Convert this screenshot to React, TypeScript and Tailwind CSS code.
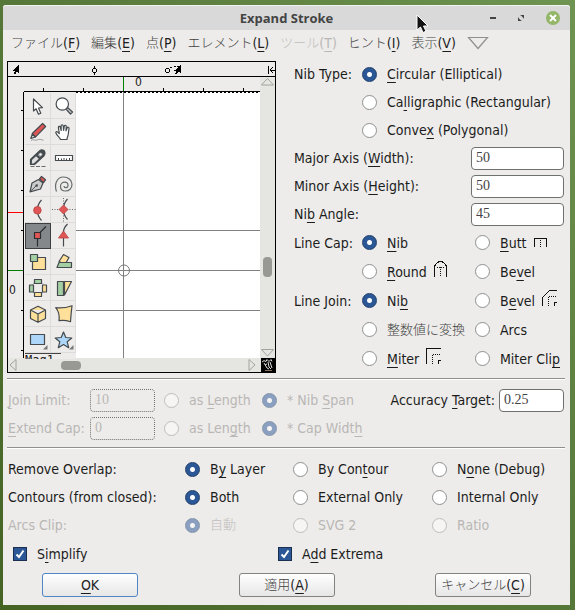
import React from "react";

/* Label text in which the character after "_" is the keyboard mnemonic. */
function Mnemonic({ text }: { text: string }) {
  const at = text.indexOf("_");
  if (at < 0) return <span className="whitespace-nowrap">{text}</span>;
  return (
    <span className="whitespace-nowrap">
      {text.slice(0, at)}
      <u className="decoration-1 underline-offset-3 [text-decoration-skip-ink:none]">{text[at + 1]}</u>
      {text.slice(at + 2)}
    </span>
  );
}

function Jp({ children }: { children: React.ReactNode }) {
  return <span className="text-[13px] font-light whitespace-nowrap opacity-85">{children}</span>;
}

type RadioProps = {
  name: string;
  text?: string;
  jp?: string;
  checked?: boolean;
  disabled?: boolean;
  children?: React.ReactNode;
};

function Radio({ name, text, jp, checked, disabled, children }: RadioProps) {
  return (
    <label className={`flex items-center gap-2.5 ${disabled ? "text-[#b9b7b5]" : ""}`}>
      <input
        type="radio"
        name={name}
        defaultChecked={checked}
        disabled={disabled}
        className="size-[15px] shrink-0 appearance-none rounded-full border border-[#8e9090] bg-white checked:border-[#1b3a66] checked:bg-[radial-gradient(circle,#fff_0_2px,#2b5797_3px)] disabled:opacity-50"
      />
      {jp ? <Jp>{jp}</Jp> : <Mnemonic text={text ?? ""} />}
      {children}
    </label>
  );
}

function Field({ id, value, disabled, className = "" }: { id: string; value: string; disabled?: boolean; className?: string }) {
  return (
    <input
      id={id}
      type="text"
      defaultValue={value}
      disabled={disabled}
      className={`h-[23px] rounded-[4px] border border-[#6f716d] bg-white px-1 font-['Liberation_Serif',serif] text-sm leading-4 text-[#444] disabled:border-dotted disabled:bg-transparent disabled:text-[#b9b7b5] ${className}`}
    />
  );
}

function Check({ text }: { text: string }) {
  return (
    <label className="flex items-center gap-2.5">
      <span className="relative grid size-[14px]">
        <input type="checkbox" defaultChecked className="size-[14px] appearance-none border border-[#1a2f50] bg-white checked:bg-[#2b5797]" />
        <svg viewBox="0 0 14 14" className="pointer-events-none absolute inset-0 size-[14px]" fill="none" stroke="#fff" strokeWidth="2">
          <path d="M3.5 7.5 6 10l4.5-6.5" />
        </svg>
      </span>
      <Mnemonic text={text} />
    </label>
  );
}

/* ---------- tool palette ---------- */

const INK = "#444a4d";
const RED = "#e05555";
const GREEN = "#a3cfa3";
const YELLOW = "#ffe09a";
const BLUE = "#add6f8";

const tools: { name: string; art: React.ReactNode }[] = [
  {
    name: "Pointer",
    art: <path d="M8.5 6v12l2.6-2.2 2.4 5.4 2.3-1-2.3-5.2 4-.4z" fill="#fff" />,
  },
  {
    name: "Magnify",
    art: (
      <>
        <path d="m15 16 1.500-1.500 5 4.500-2 2z" fill="#ccc" />
        <circle cx="11.300" cy="11" r="6.200" fill="#fff" />
      </>
    ),
  },
  {
    name: "Freehand",
    art: (
      <>
        <path d="M5.800 19.500 7.300 15l3 3z" fill="#ddd" />
        <path d="M7.300 14.500 17.600 4.500l3 3L10.600 17.800z" fill={RED} />
        <path d="M6 21.500c2-2 4 .5 6-.5s4-.7 6.500.3" fill="none" stroke="#888" strokeWidth=".8" />
      </>
    ),
  },
  {
    name: "Scroll by hand",
    art: (
      <path
        d="M9.500 20.500c-.5-2-3.500-3.800-4.600-6.500-.5-1.300.9-1.800 1.800-.9l1.600 1.500-.9-6c-.2-1.400 1.500-1.700 1.900-.3l.9 3.200-.1-4.700c0-1.400 1.900-1.400 2.100 0l.4 4.500.7-4.200c.3-1.300 2-1 1.900.3l-.2 4.500 1.200-3c.5-1.200 2-.7 1.800.6-.6 3-.4 6-1.400 8.300-.4.900-.6 1.500-.6 2.700z"
        fill="#fff"
      />
    ),
  },
  {
    name: "Knife",
    art: (
      <>
        <path d="M5.500 19.500v-5L15 5.500c1.500-1.300 5-.5 5 2.500 0 1-.5 2-1 2.700L9.500 19.500z" fill={INK} />
        <path d="m6.800 18.500.2-3.500 4-3.700 2.800 2.500-5 4.700z" fill="#ddd" stroke="none" />
        <path d="m12.500 10 3-2.800 2.500 2-3 3z" fill="#8b9092" stroke="none" />
        <circle cx="15.500" cy="9.500" r="1.200" fill="#eee" stroke="none" />
        <path d="M5.500 21.500h15" fill="none" strokeWidth=".8" strokeDasharray="4 1.500" />
      </>
    ),
  },
  {
    name: "Ruler",
    art: (
      <>
        <path d="M4.500 10.500h17v5h-17z" fill="#fff" />
        <path d="M7.500 13v2M10.500 13.500v1.500M13 13v2M15.500 13.500v1.500M18.500 13v2" strokeWidth="1" />
      </>
    ),
  },
  {
    name: "Pen",
    art: (
      <>
        <path d="m14.500 7.800 2-2.300 4 3.300-2 2.800z" fill={RED} />
        <path d="M5 20.800 7 12l6.500-3.500L18 12l-2.500 6z" fill="#ccc" />
        <path d="m5 20.800 6-5.800" strokeWidth=".9" />
        <circle cx="11.700" cy="14.500" r="1.300" fill={INK} stroke="none" />
      </>
    ),
  },
  {
    name: "Spiro",
    art: (
      <path
        d="M5.500 20.500C3 14 5.500 6 12.500 6c5 0 8.500 3.500 8.500 7.500 0 4-3 6.500-6.500 6.500-3.200 0-5-2-5-4.500s1.800-4.300 4.200-4.300c2 0 3.300 1.300 3.300 3s-1 2.500-2.300 2.500c-1.200 0-1.700-.8-1.700-1.600"
        fill="none"
        stroke="#666b6d"
      />
    ),
  },
  {
    name: "Curve point",
    art: (
      <>
        <path d="M16.500 3C11 9 11 17.500 16.500 23.500" fill="none" />
        <circle cx="12.400" cy="13.300" r="3.800" fill={RED} stroke="#b94040" strokeWidth=".8" />
      </>
    ),
  },
  {
    name: "HV curve point",
    art: (
      <>
        <path d="M1 12.500h24M12.500 1v24" strokeDasharray="1 1.500" strokeWidth=".8" />
        <path d="M16.500 2C11 8 11 16.500 16.500 22.500" fill="none" />
        <path d="m12.500 8 4.500 4.500-4.500 4.500L8 12.500z" fill={RED} stroke="#b94040" strokeWidth=".8" />
      </>
    ),
  },
  {
    name: "Corner point",
    art: (
      <>
        <path d="M21 3.500 12.500 12v11.500" fill="none" stroke="#2b2f31" />
        <path d="M9.500 9.500h6v6h-6z" fill={RED} stroke="#2b2f31" />
      </>
    ),
  },
  {
    name: "Tangent point",
    art: (
      <>
        <path d="M16.500 1q-4 4-4 8v14.500" fill="none" />
        <path d="m12.500 8 5 7h-10z" fill={RED} stroke="#b94040" strokeWidth=".8" />
      </>
    ),
  },
  {
    name: "Scale",
    art: (
      <>
        <path d="M7.500 8.500h13v12h-13z" fill={YELLOW} />
        <path d="M5.500 5.500h7v7h-7z" fill={GREEN} />
      </>
    ),
  },
  {
    name: "Rotate",
    art: (
      <>
        <path d="m12.500 5.500 5.500 3-4 7-6-3z" fill={YELLOW} />
        <path d="M8 13.500h12.500v5H6z" fill={GREEN} />
      </>
    ),
  },
  {
    name: "Flip",
    art: (
      <>
        <circle cx="13" cy="13" r="6.500" fill="none" strokeDasharray="1 1.500" strokeWidth=".8" />
        <path d="M9.500 4.500h7v4h-7zM4.500 10h4v7h-4z" fill={GREEN} />
        <path d="M17.500 10h4v7h-4zM9.500 17.500h7v4h-7z" fill={YELLOW} />
      </>
    ),
  },
  {
    name: "Skew",
    art: (
      <>
        <path d="M13.500 6.500h7l-7 13.500z" fill={YELLOW} />
        <path d="M6.500 6.500h6v14h-6z" fill={GREEN} />
      </>
    ),
  },
  {
    name: "Rotate in 3D",
    art: <path d="M13 5.300 20.500 9v8.500L13 21.300 5.500 17.500V9zM5.500 9 13 13l7.500-4M13 13v8" fill={YELLOW} />,
  },
  {
    name: "Perspective",
    art: <path d="M4.700 6.700q8 1 16.300-2-1 8-1.500 16-6-2-11.500-1 1-8-3.300-13z" fill={YELLOW} />,
  },
  {
    name: "Rectangle",
    art: (
      <>
        <path d="M5.500 7.500h14v10h-14z" fill={BLUE} />
        <path d="M22.500 18v4.500H18z" fill="#777" stroke="none" />
      </>
    ),
  },
  {
    name: "Star",
    art: (
      <>
        <path d="m12.500 5 2.300 5.500 6 .5-4.600 3.800 1.500 5.900-5.200-3.200-5.200 3.200 1.500-5.900L4.200 11l6-.5z" fill={BLUE} />
        <path d="M22.500 18v4.500H18z" fill="#777" stroke="none" />
      </>
    ),
  },
];

function Palette() {
  return (
    <div className="absolute left-[17px] top-[16px] h-[266px] w-[51px] overflow-hidden bg-[#edecea]">
      <div className="grid grid-cols-2">
        {tools.map((t) => (
          <button
            key={t.name}
            aria-label={t.name}
            className={`h-[26px] border-b border-r border-[#dddcda] ${t.name === "Corner point" ? "bg-[#84888a] outline outline-1 -outline-offset-1 outline-[#3b3f41]" : ""}`}
          >
            <svg viewBox="0 0 26 26" className="size-[26px]" stroke={INK} strokeWidth="1.2" strokeLinejoin="round">
              {t.art}
            </svg>
          </button>
        ))}
      </div>
      <div className="w-9 border-t border-[#444] font-['DejaVu_Sans_Mono',monospace] text-xs leading-3">Mag1</div>
    </div>
  );
}

/* ---------- glyph canvas with rulers and scroll bars ---------- */

function GlyphView() {
  return (
    <section className="flex h-[312px] w-[269px] shrink-0 flex-col border border-black">
      <svg viewBox="8 62 267 14" className="h-[15px] w-full shrink-0 border-b border-black" shapeRendering="crispEdges" stroke="#000" fill="none">
        <path d="M19 65v8.500l-2-2-1.500 2.500h-2l2-3.500h-2.500z" fill="#000" stroke="none" />
        <circle cx="94.500" cy="70.500" r="2" />
        <path d="M94.500 66v2M94.500 73v2" />
        <circle cx="167.500" cy="70.500" r="2" />
        <path d="M170 67.500h3M174 66.500h5" strokeDasharray="2 1" />
        <path d="M180.500 65v8.500l-2-2-1.500 2.500h-2l2-3.500h-2.500z" fill="#000" stroke="none" />
        <path d="M268.500 66v8M273 67l-3 3 3 3M271 70h4" />
      </svg>
      <div className="flex min-h-0 flex-1">
        <div className="relative min-w-0 flex-1 bg-[#edecea]">
          <svg viewBox="8 77 252 281" className="h-[281px] w-[252px]" shapeRendering="crispEdges" fill="none">
            <path d="M76 92h184v266H76z" fill="#fff" />
            <path d="M123.500 92v266M76 230.500h184M76 270.500h184M76 310.500h184" stroke="#808080" />
            <path d="M24 91.500h236M23.500 92v266M43.500 88v3M83.500 88v3M163.500 88v3M203.500 88v3M243.500 88v3M21 110.500h3M21 150.500h3M21 190.500h3M21 230.500h3M21 310.500h3M21 350.500h3" stroke="#000" />
            <path d="M76 92.500h184" stroke="#000" strokeDasharray="2 2" />
            <path d="M123.500 77v14M8 270.500h15" stroke="#008000" />
            <path d="M8 212.500h15" stroke="#f00" />
            <circle cx="124" cy="270.500" r="5.500" stroke="#777" shapeRendering="auto" />
            <g fill="#222" fontFamily="'DejaVu Sans Condensed','DejaVu Sans',sans-serif" fontSize="12">
              <text x="135" y="86">0</text>
              <text x="9" y="294">0</text>
            </g>
          </svg>
          <Palette />
        </div>
        <div className="flex w-[15px] flex-col items-center bg-[#e5e6e2]">
          <svg viewBox="0 0 15 10" className="h-2.5 w-[15px] shrink-0" fill="none" stroke="#a2a29f">
            <path d="M1.500 8h12l-6-6.500z" />
          </svg>
          <div className="mt-[170px] h-5 w-[9px] rounded-[4px] bg-[#989994]" />
          <svg viewBox="0 0 15 10" className="mt-auto h-2.5 w-[15px] shrink-0" fill="none" stroke="#a2a29f">
            <path d="M1.500 1.500h12L7.500 8z" />
          </svg>
        </div>
      </div>
      <div className="flex h-[14px] shrink-0 items-center bg-[#e5e6e2]">
        <svg viewBox="0 0 10 14" className="h-[14px] w-2.5" fill="none" stroke="#a2a29f">
          <path d="M8 1.500v11L2 7z" />
        </svg>
        <div className="ml-[43px] h-[9px] w-5 rounded-[4px] bg-[#989994]" />
        <svg viewBox="0 0 10 14" className="ml-auto mr-1 h-[14px] w-2.5" fill="none" stroke="#a2a29f">
          <path d="M2 1.500v11L8 7z" />
        </svg>
        <svg viewBox="0 0 14 14" className="h-[14px] w-[14px] bg-black" fill="none" stroke="#ddd">
          <path d="M1 4q2-2.500 4-.5l1-2 2 2 2-2 1 2M3 5l3 5 2 1M7 4l1 5 2 2M9 4l2 6M4 7l2-1" />
          <path d="M4 12.500h7" stroke="#8a6f5c" />
        </svg>
      </div>
    </section>
  );
}

/* Small pictures beside the cap and join choices. */
function ShapeIcon({ solid, dots, corner }: { solid: string; dots: string; corner?: string }) {
  return (
    <svg viewBox="0 0 16 16" className="-ml-1 mb-1.5 size-4" fill="none" stroke="#111" shapeRendering="crispEdges">
      <path d={solid} />
      <path d={dots} strokeDasharray="1 1" />
      {corner && <path d={corner} />}
    </svg>
  );
}

const menus: { jp: string; key: string; disabled?: boolean }[] = [
  { jp: "ファイル", key: "F" },
  { jp: "編集", key: "E" },
  { jp: "点", key: "P" },
  { jp: "エレメント", key: "L" },
  { jp: "ツール", key: "T", disabled: true },
  { jp: "ヒント", key: "I" },
  { jp: "表示", key: "V" },
];

function ActionButton({ primary, children }: { primary?: boolean; children: React.ReactNode }) {
  return (
    <button
      className={`flex h-6 w-24 items-center justify-center rounded-[3px] border bg-linear-to-b from-white to-[#e6e6e6] ${primary ? "border-[#4f86c6]" : "border-[#82827f]"}`}
    >
      {children}
    </button>
  );
}

function SizeRow({ id, text, value }: { id: string; text: string; value: string }) {
  return (
    <div className="flex h-7 items-center justify-between">
      <label htmlFor={id}><Mnemonic text={text} /></label>
      <Field id={id} value={value} className="w-[93px]" />
    </div>
  );
}

const rule = "border-t border-[#8f8f8c] shadow-[inset_0_1px_0_#fff]";

export default function App() {
  return (
    <div className="relative min-h-screen bg-linear-to-bl from-[#6f9350] via-[#557839] to-[#456424] pb-[5px] pl-[3px] pr-[5px] pt-[5px] font-['DejaVu_Sans_Condensed','DejaVu_Sans','Noto_Sans_CJK_JP',sans-serif] text-sm leading-5 text-[#1c1c1c]">
      <main className="rounded-t-[3px] bg-[#edecea]">
        <header className="flex h-[25px] items-center rounded-t-[3px] border-t border-[#f3f3f3] bg-[#d9d9d9] pr-[10px]">
          <div className="w-20 shrink-0" />
          <h1 className="flex-1 text-center font-['Open_Sans','Noto_Sans',sans-serif] text-[13px] font-bold text-[#444]">Expand Stroke</h1>
          <div className="flex w-[70px] shrink-0 items-center justify-between">
            <button aria-label="Minimize" className="h-[2px] w-1.5 bg-[#444]" />
            <button aria-label="Restore">
              <svg viewBox="0 0 8 8" className="size-2" fill="#444">
                <path d="M3 1h4v4L6 3.500 4.500 2zM1 3v4h4L3.500 6 2 4.500z" />
              </svg>
            </button>
            <button aria-label="Close" className="flex size-[14px] items-center justify-center rounded-full bg-[#93b668]">
              <svg viewBox="0 0 8 8" className="size-2" stroke="#fff" strokeWidth="2">
                <path d="m1 1 6 6M7 1 1 7" />
              </svg>
            </button>
          </div>
        </header>

        <nav className="flex h-[30px] items-center gap-[11px] pb-1 pl-2">
          {menus.map((m) => (
            <button key={m.key} disabled={m.disabled} className="flex items-center whitespace-nowrap disabled:text-[#b9b7b5]">
              <Jp>{m.jp}</Jp>
              <Mnemonic text={`(_${m.key})`} />
            </button>
          ))}
          <button aria-label="More">
            <svg viewBox="0 0 22 14" className="h-3.5 w-[22px]" fill="none" stroke="#8f8f8c" strokeWidth="1.200">
              <path d="M1.500 1.500h19L11 12.500z" />
            </svg>
          </button>
        </nav>

        <div className="flex gap-[18px] pl-1 pr-[6px]">
          <div className="pt-px">
            <GlyphView />
          </div>
          <div className="flex min-w-0 flex-1 flex-col">
            <div className="grid auto-rows-[28px] grid-cols-[68px_1fr] items-center">
              <span>Nib Type:</span>
              <Radio name="nib" text="_Circular (Elliptical)" checked />
              <div className="col-start-2"><Radio name="nib" text="Ca_lligraphic (Rectangular)" /></div>
              <div className="col-start-2"><Radio name="nib" text="Conve_x (Polygonal)" /></div>
            </div>
            <SizeRow id="major" text="Major Axis (_Width):" value="50" />
            <SizeRow id="minor" text="Minor Axis (_Height):" value="50" />
            <SizeRow id="angle" text="Ni_b Angle:" value="45" />
            <div className="grid auto-rows-[29px] grid-cols-[68px_113px_1fr] items-center">
              <span>Line Cap:</span>
              <Radio name="cap" text="_Nib" checked />
              <Radio name="cap" text="_Butt">
                <ShapeIcon solid="M1.500 15V6.500h12V15" dots="M7.500 8v8" />
              </Radio>
              <div className="col-start-2">
                <Radio name="cap" text="_Round">
                  <ShapeIcon solid="M1.500 16V5.500l1-2 2-2 2-1h2l2 1 2 2 1 2V16" dots="M7.500 6v10M4 6.500h7" />
                </Radio>
              </div>
              <Radio name="cap" text="Be_vel" />
              <span>Line Join:</span>
              <Radio name="join" text="Ni_b" checked />
              <Radio name="join" text="B_evel">
                <ShapeIcon solid="M1.500 16V7.500l7-7H16" dots="M7.500 16V6.500H16" corner="M13.500 16v-3.500H16" />
              </Radio>
              <div className="col-start-2"><Radio name="join" jp="整数値に変換" /></div>
              <Radio name="join" text="Arcs" />
              <div className="col-start-2">
                <Radio name="join" text="_Miter">
                  <ShapeIcon solid="M1.500 16V.5H16" dots="M7.500 16V6.500H16" corner="M13.500 16v-3.500H16" />
                </Radio>
              </div>
              <Radio name="join" text="Miter Cli_p" />
            </div>
          </div>
        </div>

        <div className="pl-1 pr-[5px] pt-[5px]">
          <div className={`flex items-start justify-between pb-[5px] pl-px pr-px pt-[7px] ${rule}`}>
            <div className="grid auto-rows-[28px] grid-cols-[82px_74px_98px_auto] items-center text-[#b9b7b5]">
              <label htmlFor="limit"><Mnemonic text="_Join Limit:" /></label>
              <Field id="limit" value="10" disabled className="w-[65px]" />
              <Radio name="limitUnit" text="as _Length" disabled />
              <Radio name="limitUnit" text="* Nib _Span" checked disabled />
              <label htmlFor="extend"><Mnemonic text="_Extend Cap:" /></label>
              <Field id="extend" value="0" disabled className="w-[65px]" />
              <Radio name="capUnit" text="as Len_gth" disabled />
              <Radio name="capUnit" text="* Cap Widt_h" checked disabled />
            </div>
            <div className="flex h-7 items-center gap-1">
              <label htmlFor="accuracy"><Mnemonic text="Accuracy _Target:" /></label>
              <Field id="accuracy" value="0.25" className="w-[65px]" />
            </div>
          </div>

          <div className={`grid auto-rows-[28px] grid-cols-[177px_108px_139px_1fr] items-center pl-px pt-[7px] ${rule}`}>
            <span>Remove Overlap:</span>
            <Radio name="overlap" text="B_y Layer" checked />
            <Radio name="overlap" text="By Con_tour" />
            <Radio name="overlap" text="N_one (Debug)" />
            <span className="whitespace-nowrap">Contours (from closed):</span>
            <Radio name="contours" text="Both" checked />
            <Radio name="contours" text="External Only" />
            <Radio name="contours" text="Internal Only" />
            <span className="text-[#b9b7b5]">Arcs Clip:</span>
            <Radio name="arcs" jp="自動" checked disabled />
            <Radio name="arcs" text="SVG 2" disabled />
            <Radio name="arcs" text="Ratio" disabled />
          </div>

          <div className="grid h-[30px] grid-cols-[265px_1fr] items-center pl-[6px]">
            <Check text="S_implify" />
            <Check text="A_dd Extrema" />
          </div>

          <footer className="flex justify-between pb-2 pl-[35px] pr-[34px] pt-[4px]">
            <ActionButton primary><Mnemonic text="_OK" /></ActionButton>
            <ActionButton><Jp>適用</Jp><Mnemonic text="(_A)" /></ActionButton>
            <ActionButton><Jp>キャンセル</Jp><Mnemonic text="(_C)" /></ActionButton>
          </footer>
        </div>
      </main>

      <svg viewBox="0 0 14 20" className="pointer-events-none absolute left-[416px] top-[14px] h-5 w-3.5" stroke="#fff" strokeWidth="1">
        <path d="M1 1v15l3.500-3 2.500 5.500 3-1.300-2.500-5.200H12z" fill="#111" />
      </svg>
    </div>
  );
}
